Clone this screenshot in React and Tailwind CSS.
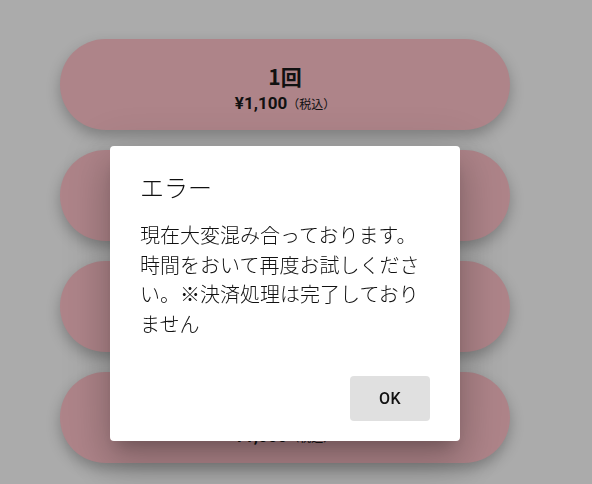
import React from 'react';

const plans = [
  { count: '1回', price: '¥1,100' },
  { count: '3回', price: '¥3,300' },
  { count: '5回', price: '¥5,500' },
  { count: '10回', price: '¥1,000' },
];

function PlanButton({ count, price }) {
  return (
    <button className="h-[91px] w-[450px] rounded-full bg-[#ae8489] shadow-[0_6px_14px_rgba(0,0,0,0.25)] flex flex-col items-center justify-center pt-[10px] text-[#111]">
      <span className="text-[21px] font-bold leading-[28px]">{count}</span>
      <span className="flex items-baseline leading-[26px]">
        <span className="text-[17px] font-bold font-['Roboto',sans-serif]">{price}</span>
        <span className="text-[12px]">（税込）</span>
      </span>
    </button>
  );
}

function ErrorDialog() {
  return (
    <div className="fixed inset-0">
      <div className="ml-[110px] mt-[146px] w-[350px] h-[295px] bg-white rounded-[4px] shadow-[0_11px_15px_-7px_rgba(0,0,0,0.2),0_24px_38px_3px_rgba(0,0,0,0.14),0_9px_46px_8px_rgba(0,0,0,0.12)] flex flex-col">
        <h2 className="px-[30px] pt-[25px] text-[24px] leading-[32px] text-[#111] font-light">エラー</h2>
        <p className="px-[30px] mt-[17px] text-[20px] leading-[29.5px] text-[#111] font-light">
          現在大変混み合っております。時間をおいて再度お試しください。※決済処理は完了しておりません
        </p>
        <div className="mt-auto flex justify-end px-[30px] pb-[20px]">
          <button className="w-[80px] h-[45px] rounded-[4px] bg-[#e0e0e0] text-[16px] font-medium font-['Roboto',sans-serif] text-[#111] tracking-wide">
            OK
          </button>
        </div>
      </div>
    </div>
  );
}

export default function App() {
  return (
    <div className="relative h-[484px] overflow-hidden bg-[#ababab] font-['Noto_Sans_CJK_JP','Noto_Sans',sans-serif]">
      <div className="pl-[60px] pt-[39px] flex flex-col gap-[20px]">
        {plans.map((p) => (
          <PlanButton key={p.count} count={p.count} price={p.price} />
        ))}
      </div>
      <ErrorDialog />
    </div>
  );
}
